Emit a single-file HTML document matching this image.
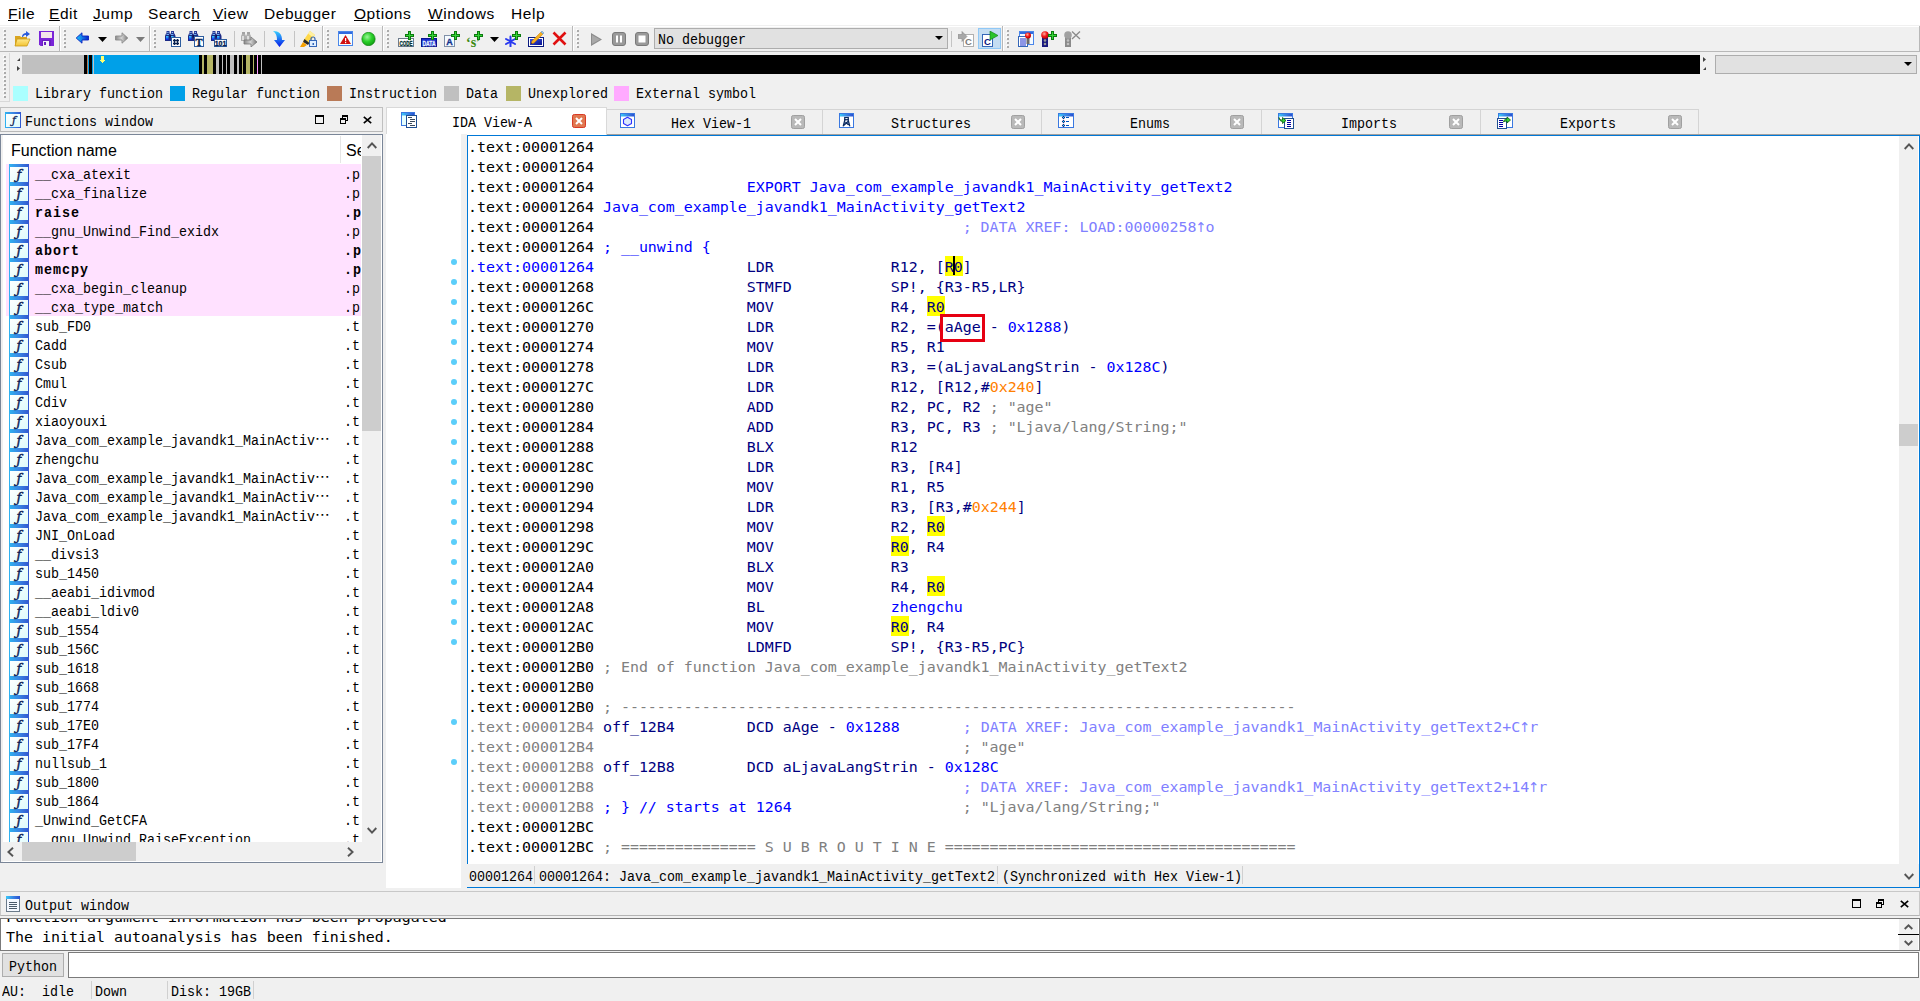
<!DOCTYPE html><html><head><meta charset="utf-8"><title>IDA</title><style>*{box-sizing:border-box;margin:0;padding:0}
html,body{width:1920px;height:1001px;overflow:hidden;background:#f0f0f0}
body{position:relative;font-family:"Liberation Sans","DejaVu Sans",sans-serif;color:#000}
.a{position:absolute}
.ss{position:absolute;font-family:"Liberation Mono","DejaVu Sans Mono",monospace;font-size:14.5px;line-height:16px;white-space:pre;transform:scaleX(.9195);transform-origin:0 0}
.menu{position:absolute;top:1px;font-family:"Liberation Sans","DejaVu Sans",sans-serif;font-size:15.5px;letter-spacing:.55px;line-height:26px;white-space:pre}
.menu u{text-decoration:underline;text-underline-offset:1px;text-decoration-thickness:1px}
.dl{position:absolute;left:468px;height:20px;font-family:"DejaVu Sans Mono","Liberation Mono",monospace;font-size:14.95px;line-height:22px;white-space:pre;color:#000080}
.dl span{display:inline-block;height:20px;vertical-align:top}
.k{color:#000}.g{color:#808080}.b{color:#0000ff}.n{color:#000080}.x{color:#8080ff}.o{color:#ff8000}
.y{background:#ffff00}
.dot{position:absolute;left:451px;width:6px;height:6px;border-radius:3px;background:#5bcefa}
.sq{position:absolute;top:86px;width:15px;height:15px}
.hd{position:absolute;font-family:"Liberation Sans","DejaVu Sans",sans-serif;font-size:16px;line-height:20px;white-space:pre}
.ow{position:absolute;font-family:"DejaVu Sans Mono","Liberation Mono",monospace;font-size:14.95px;line-height:20px;white-space:pre;color:#000}
.ss b{font-weight:bold;letter-spacing:1.1px}
.dl span.ar{width:9px;font-family:"DejaVu Sans","Liberation Sans",sans-serif;font-size:13.5px;text-indent:-1.2px;overflow:visible}
.el{font-family:"IPAGothic","Noto Sans CJK SC",sans-serif;font-size:16px;line-height:0}
</style></head><body>
<div class="a" style="left:0px;top:0px;width:1920px;height:25px;background:#fff;"></div>
<div class="a" style="left:0px;top:26px;width:1920px;height:1px;background:#fff;"></div>
<div class="menu" style="left:8px"><u>F</u>ile</div>
<div class="menu" style="left:49px"><u>E</u>dit</div>
<div class="menu" style="left:93px"><u>J</u>ump</div>
<div class="menu" style="left:148px">Searc<u>h</u></div>
<div class="menu" style="left:213px"><u>V</u>iew</div>
<div class="menu" style="left:264px">Deb<u>u</u>gger</div>
<div class="menu" style="left:354px"><u>O</u>ptions</div>
<div class="menu" style="left:428px"><u>W</u>indows</div>
<div class="menu" style="left:511px">Help</div>
<div class="a" style="left:0px;top:51px;width:1920px;height:1px;background:#b8b8b8;"></div>
<div class="a" style="left:1919px;top:26px;width:1px;height:25px;background:#b8b8b8;"></div>
<svg width="0" height="0" style="position:absolute"><defs><linearGradient id="gy" x1="0" y1="0" x2="0" y2="1"><stop offset="0" stop-color="#ffe98a"/><stop offset="1" stop-color="#f3c332"/></linearGradient><linearGradient id="gb" x1="0" y1="0" x2="1" y2="0"><stop offset="0" stop-color="#19c9ff"/><stop offset="1" stop-color="#0a22c8"/></linearGradient><linearGradient id="gbv" x1="0" y1="0" x2="0" y2="1"><stop offset="0" stop-color="#37d0ff"/><stop offset="1" stop-color="#0618e8"/></linearGradient><linearGradient id="gg" x1="0" y1="0" x2="1" y2="0"><stop offset="0" stop-color="#8a8a8a"/><stop offset=".5" stop-color="#d2d2d2"/><stop offset="1" stop-color="#777"/></linearGradient><radialGradient id="gr" cx=".4" cy=".35" r=".7"><stop offset="0" stop-color="#9cf59a"/><stop offset=".5" stop-color="#2bd02a"/><stop offset="1" stop-color="#0e9a10"/></radialGradient><radialGradient id="rr" cx=".4" cy=".35" r=".7"><stop offset="0" stop-color="#ffb0a0"/><stop offset=".5" stop-color="#f01818"/><stop offset="1" stop-color="#b00000"/></radialGradient><linearGradient id="gdb" x1="0" y1="0" x2="1" y2="1"><stop offset="0" stop-color="#3a50e0"/><stop offset="1" stop-color="#0a1490"/></linearGradient><symbol id="bino" viewBox="0 0 16 16"><rect x="1.5" y="0" width="3" height="3" fill="#2a3a98"/><rect x="6" y="0" width="3" height="3" fill="#2a3a98"/><rect x="2.3" y="1" width="1.2" height="1" fill="#8fc4f5"/><rect x="6.8" y="1" width="1.2" height="1" fill="#8fc4f5"/><path d="M1 2.5h4l.5 2.5v5H0V5z" fill="#1c2a86"/><path d="M5.5 2.5h4l1 2.5v5H5V5z" fill="#1c2a86"/><rect x="1.5" y="3" width="2.5" height="1" fill="#6fb0f0"/><rect x="6" y="3" width="2.5" height="1" fill="#6fb0f0"/><rect x="1" y="5" width="2.5" height="4" fill="url(#gbv)"/><rect x="6" y="5" width="2.5" height="4" fill="url(#gbv)"/><rect x="4.5" y="4" width="1.5" height="2.5" fill="#0c1450"/></symbol><symbol id="plus" viewBox="0 0 9 9"><path d="M3 0h3v3h3v3H6v3H3V6H0V3h3z" fill="#0c7a10"/><path d="M4 1h1v3h3v1H5v3H4V5H1V4h3z" fill="#35d436"/></symbol></defs></svg>
<svg class="a" style="left:3px;top:29px" width="3" height="20" viewBox="0 0 3 20" ><rect x="0" y="0" width="2" height="2" fill="#fbfbfb"/><rect x="1" y="1" width="2" height="2" fill="#ababab"/><rect x="0" y="4" width="2" height="2" fill="#fbfbfb"/><rect x="1" y="5" width="2" height="2" fill="#ababab"/><rect x="0" y="8" width="2" height="2" fill="#fbfbfb"/><rect x="1" y="9" width="2" height="2" fill="#ababab"/><rect x="0" y="12" width="2" height="2" fill="#fbfbfb"/><rect x="1" y="13" width="2" height="2" fill="#ababab"/><rect x="0" y="16" width="2" height="2" fill="#fbfbfb"/><rect x="1" y="17" width="2" height="2" fill="#ababab"/></svg>
<svg class="a" style="left:14px;top:31px" width="17" height="16" viewBox="0 0 17 16" ><path d="M1 5h5l1 1h6v9H1z" fill="#d9a520"/><path d="M3 8h13l-3 7H1z" fill="url(#gy)" stroke="#c99a1a" stroke-width=".8"/><path d="M8 6c0-3 2-4 4-4V0l4 3-4 3V4c-1.5 0-2.5.5-3 2z" fill="#2a5bdc"/></svg>
<svg class="a" style="left:39px;top:31px" width="15" height="15" viewBox="0 0 15 15" ><path d="M0 0h15v15H1.5L0 13.5z" fill="#7a25d8"/><rect x="2" y="1" width="11" height="6" fill="#f4e6ea"/><rect x="3" y="9" width="9" height="6" fill="#6a1fc0"/><rect x="4" y="10" width="6" height="5" fill="#f2f2fa"/><rect x="5" y="11" width="2" height="3" fill="#6a1fc0"/></svg>
<div class="a" style="left:59px;top:26px;width:1px;height:25px;background:#b8b8b8"></div>
<div class="a" style="left:60px;top:27px;width:1px;height:24px;background:#fff"></div>
<svg class="a" style="left:63px;top:29px" width="3" height="20" viewBox="0 0 3 20" ><rect x="0" y="0" width="2" height="2" fill="#fbfbfb"/><rect x="1" y="1" width="2" height="2" fill="#ababab"/><rect x="0" y="4" width="2" height="2" fill="#fbfbfb"/><rect x="1" y="5" width="2" height="2" fill="#ababab"/><rect x="0" y="8" width="2" height="2" fill="#fbfbfb"/><rect x="1" y="9" width="2" height="2" fill="#ababab"/><rect x="0" y="12" width="2" height="2" fill="#fbfbfb"/><rect x="1" y="13" width="2" height="2" fill="#ababab"/><rect x="0" y="16" width="2" height="2" fill="#fbfbfb"/><rect x="1" y="17" width="2" height="2" fill="#ababab"/></svg>
<svg class="a" style="left:75px;top:32px" width="15" height="12" viewBox="0 0 15 12" ><path d="M7 .8v3.2h6.5v4H7v3.2L1.2 6z" fill="url(#gb)" stroke="#0a20c0" stroke-width=".9" stroke-linejoin="round"/></svg>
<svg class="a" style="left:98px;top:37px" width="9" height="5" viewBox="0 0 9 5" ><path d="M0 0h9L4.5 5z" fill="#000"/></svg>
<svg class="a" style="left:114px;top:32px" width="15" height="12" viewBox="0 0 15 12" ><path d="M8 .8v3.2H1.5v4H8v3.2L13.8 6z" fill="url(#gg)" stroke="#8a8a8a" stroke-width=".9" stroke-linejoin="round"/></svg>
<svg class="a" style="left:136px;top:37px" width="9" height="5" viewBox="0 0 9 5" ><path d="M0 0h9L4.5 5z" fill="#7a7a7a"/></svg>
<div class="a" style="left:149px;top:26px;width:1px;height:25px;background:#b8b8b8"></div>
<div class="a" style="left:150px;top:27px;width:1px;height:24px;background:#fff"></div>
<svg class="a" style="left:153px;top:29px" width="3" height="20" viewBox="0 0 3 20" ><rect x="0" y="0" width="2" height="2" fill="#fbfbfb"/><rect x="1" y="1" width="2" height="2" fill="#ababab"/><rect x="0" y="4" width="2" height="2" fill="#fbfbfb"/><rect x="1" y="5" width="2" height="2" fill="#ababab"/><rect x="0" y="8" width="2" height="2" fill="#fbfbfb"/><rect x="1" y="9" width="2" height="2" fill="#ababab"/><rect x="0" y="12" width="2" height="2" fill="#fbfbfb"/><rect x="1" y="13" width="2" height="2" fill="#ababab"/><rect x="0" y="16" width="2" height="2" fill="#fbfbfb"/><rect x="1" y="17" width="2" height="2" fill="#ababab"/></svg>
<svg class="a" style="left:165px;top:31px" width="16" height="16" viewBox="0 0 16 16" ><use href="#bino" width="16" height="16"/><rect x="6.5" y="6.5" width="9" height="9" fill="#fff" stroke="#2d5d9f"/><path d="M9.5 8v6M12.5 8v6M8 9.5h6M8 12.5h6" stroke="#06204f" stroke-width="1.3"/></svg>
<svg class="a" style="left:188px;top:31px" width="16" height="16" viewBox="0 0 16 16" ><use href="#bino" width="16" height="16"/><rect x="6.5" y="5.5" width="9" height="10" fill="#fff" stroke="#2d5d9f"/><text x="11" y="14.5" text-anchor="middle" font-family="Liberation Serif,DejaVu Serif,serif" font-weight="bold" font-size="10.5" fill="#06204f" stroke="#06204f" stroke-width=".4">T</text></svg>
<svg class="a" style="left:211px;top:31px" width="16" height="16" viewBox="0 0 16 16" ><use href="#bino" width="16" height="16"/><rect x="3.5" y="8.5" width="12" height="7" fill="#fff" stroke="#2d5d9f"/><text x="9.5" y="14.5" text-anchor="middle" font-family="Liberation Sans,DejaVu Sans,sans-serif" font-weight="bold" font-size="7" fill="#06204f" stroke="#06204f" stroke-width=".3">101</text></svg>
<div class="a" style="left:234px;top:31px;width:1px;height:16px;background:#c4c4c4"></div>
<svg class="a" style="left:241px;top:31px" width="16" height="16" viewBox="0 0 16 16" ><g opacity=".75"><rect x="1" y="1" width="3" height="2" fill="#8a8a8a"/><rect x="6" y="1" width="3" height="2" fill="#8a8a8a"/><path d="M1 3h3l1 2v5H0V5z" fill="#9a9a9a"/><path d="M6 3h3l1 2v5H5V5z" fill="#9a9a9a"/><rect x="1" y="5" width="2" height="4" fill="#d8d8d8"/><rect x="6" y="5" width="2" height="4" fill="#d8d8d8"/></g><path d="M3 9h7V6l6 5-6 5v-3H3z" fill="url(#gg)" stroke="#777" stroke-width=".8"/></svg>
<div class="a" style="left:264px;top:31px;width:1px;height:16px;background:#c4c4c4"></div>
<svg class="a" style="left:272px;top:31px" width="14" height="16" viewBox="0 0 14 16" ><path d="M1 0c6 0 9 3 9 9h3l-5.5 7L2 9h3c0-4-1-7-4-9z" fill="url(#gbv)"/></svg>
<div class="a" style="left:294px;top:31px;width:1px;height:16px;background:#c4c4c4"></div>
<svg class="a" style="left:300px;top:31px" width="17" height="16" viewBox="0 0 17 16" ><path d="M10 0l5 4-7 9-5-3z" fill="#ffd84a"/><path d="M10 0l5 4-2 2.5-5-4z" fill="#fff0a0"/><path d="M4.5 8l5 4-1.5 2-5-3z" fill="#2a2a2a"/><path d="M3 11l4 3-3 2H0z" fill="#f5a000"/><rect x="9.5" y="9.5" width="7" height="6" fill="#dfeeff" stroke="#3466b8"/><path d="M11 9.5V8a2 2 0 0 1 4 0v1.5" fill="none" stroke="#3466b8" stroke-width="1.2"/><rect x="12.5" y="12" width="1.5" height="2" fill="#3466b8"/></svg>
<div class="a" style="left:322px;top:26px;width:1px;height:25px;background:#b8b8b8"></div>
<div class="a" style="left:323px;top:27px;width:1px;height:24px;background:#fff"></div>
<svg class="a" style="left:326px;top:29px" width="3" height="20" viewBox="0 0 3 20" ><rect x="0" y="0" width="2" height="2" fill="#fbfbfb"/><rect x="1" y="1" width="2" height="2" fill="#ababab"/><rect x="0" y="4" width="2" height="2" fill="#fbfbfb"/><rect x="1" y="5" width="2" height="2" fill="#ababab"/><rect x="0" y="8" width="2" height="2" fill="#fbfbfb"/><rect x="1" y="9" width="2" height="2" fill="#ababab"/><rect x="0" y="12" width="2" height="2" fill="#fbfbfb"/><rect x="1" y="13" width="2" height="2" fill="#ababab"/><rect x="0" y="16" width="2" height="2" fill="#fbfbfb"/><rect x="1" y="17" width="2" height="2" fill="#ababab"/></svg>
<svg class="a" style="left:338px;top:31px" width="15" height="15" viewBox="0 0 15 15" ><rect x=".5" y=".5" width="14" height="14" fill="#f4ffff" stroke="#4a86ea"/><rect x="1" y="1" width="13" height="2" fill="#2f6be0"/><path d="M7.5 4l5.5 9H2z" fill="#d01010"/><rect x="7" y="7" width="1.2" height="3.2" fill="#fff"/><rect x="7" y="11" width="1.2" height="1.2" fill="#fff"/></svg>
<svg class="a" style="left:361px;top:32px" width="15" height="14" viewBox="0 0 15 14" ><circle cx="7.5" cy="7" r="6.700" fill="url(#gr)" stroke="#0a7a0c" stroke-width=".6"/></svg>
<div class="a" style="left:382px;top:26px;width:1px;height:25px;background:#b8b8b8"></div>
<div class="a" style="left:383px;top:27px;width:1px;height:24px;background:#fff"></div>
<svg class="a" style="left:386px;top:29px" width="3" height="20" viewBox="0 0 3 20" ><rect x="0" y="0" width="2" height="2" fill="#fbfbfb"/><rect x="1" y="1" width="2" height="2" fill="#ababab"/><rect x="0" y="4" width="2" height="2" fill="#fbfbfb"/><rect x="1" y="5" width="2" height="2" fill="#ababab"/><rect x="0" y="8" width="2" height="2" fill="#fbfbfb"/><rect x="1" y="9" width="2" height="2" fill="#ababab"/><rect x="0" y="12" width="2" height="2" fill="#fbfbfb"/><rect x="1" y="13" width="2" height="2" fill="#ababab"/><rect x="0" y="16" width="2" height="2" fill="#fbfbfb"/><rect x="1" y="17" width="2" height="2" fill="#ababab"/></svg>
<svg class="a" style="left:398px;top:31px" width="16" height="16" viewBox="0 0 16 16" ><rect x=".5" y="7.5" width="15" height="8" fill="#fff" stroke="#6e7c8c"/><text x="8" y="14.5" text-anchor="middle" font-family="Liberation Sans,DejaVu Sans,sans-serif" font-weight="bold" font-size="8" fill="#003030" stroke="#003030" stroke-width=".35" textLength="13" lengthAdjust="spacingAndGlyphs">CODE</text><use href="#plus" x="7" y="0" width="9" height="9"/></svg>
<svg class="a" style="left:421px;top:31px" width="16" height="16" viewBox="0 0 16 16" ><rect x=".5" y="7.5" width="15" height="8" fill="#1a2ccc" stroke="#0a1490"/><text x="8" y="14.5" text-anchor="middle" font-family="Liberation Sans,DejaVu Sans,sans-serif" font-weight="bold" font-size="8" fill="#e4f4ff" stroke="#e4f4ff" stroke-width=".3" textLength="13" lengthAdjust="spacingAndGlyphs">DATA</text><use href="#plus" x="7" y="0" width="9" height="9"/></svg>
<svg class="a" style="left:444px;top:31px" width="16" height="16" viewBox="0 0 16 16" ><rect x=".5" y="4.5" width="10" height="11" fill="#f4faff" stroke="#8090a8"/><text x="5.5" y="14" text-anchor="middle" font-family="Liberation Sans,DejaVu Sans,sans-serif" font-weight="bold" font-size="9" fill="#10308c" stroke="#10308c" stroke-width=".3">A</text><use href="#plus" x="7" y="0" width="9" height="9"/></svg>
<svg class="a" style="left:466px;top:31px" width="17" height="16" viewBox="0 0 17 16" ><text x="0" y="15.5" font-family="Liberation Serif,DejaVu Serif,serif" font-weight="bold" font-size="14" fill="#3a8a10">‘s’</text><use href="#plus" x="8" y="0" width="9" height="9"/></svg>
<svg class="a" style="left:490px;top:37px" width="9" height="5" viewBox="0 0 9 5" ><path d="M0 0h9L4.5 5z" fill="#000"/></svg>
<svg class="a" style="left:505px;top:31px" width="16" height="16" viewBox="0 0 16 16" ><g stroke="#2a3af0" stroke-width="2" stroke-linecap="round"><path d="M5.5 5.5v10M1 8l9 5M1 13l9-5"/></g><use href="#plus" x="7" y="0" width="9" height="9"/></svg>
<svg class="a" style="left:528px;top:31px" width="16" height="16" viewBox="0 0 16 16" ><rect x=".5" y="6.5" width="15" height="9" fill="#fff" stroke="#0a1a80"/><rect x="2" y="8" width="12" height="6" fill="url(#gdb)"/><path d="M3 13l1-3 9-9 2 2-9 9z" fill="#f6b020" stroke="#c07808" stroke-width=".5"/><path d="M13 1l1-1 2 2-1 1z" fill="#9fd0f0" stroke="#5a8ab8" stroke-width=".5"/><path d="M3 13l.5-1.5 1 1z" fill="#222"/></svg>
<svg class="a" style="left:552px;top:31px" width="15" height="15" viewBox="0 0 15 15" ><path d="M1.5 1.5l12 12M13.5 1.5l-12 12" stroke="#e01010" stroke-width="2.600" fill="none"/></svg>
<div class="a" style="left:572px;top:26px;width:1px;height:25px;background:#b8b8b8"></div>
<div class="a" style="left:573px;top:27px;width:1px;height:24px;background:#fff"></div>
<svg class="a" style="left:576px;top:29px" width="3" height="20" viewBox="0 0 3 20" ><rect x="0" y="0" width="2" height="2" fill="#fbfbfb"/><rect x="1" y="1" width="2" height="2" fill="#ababab"/><rect x="0" y="4" width="2" height="2" fill="#fbfbfb"/><rect x="1" y="5" width="2" height="2" fill="#ababab"/><rect x="0" y="8" width="2" height="2" fill="#fbfbfb"/><rect x="1" y="9" width="2" height="2" fill="#ababab"/><rect x="0" y="12" width="2" height="2" fill="#fbfbfb"/><rect x="1" y="13" width="2" height="2" fill="#ababab"/><rect x="0" y="16" width="2" height="2" fill="#fbfbfb"/><rect x="1" y="17" width="2" height="2" fill="#ababab"/></svg>
<svg class="a" style="left:591px;top:33px" width="11" height="13" viewBox="0 0 11 13" ><path d="M0 0l11 6.5L0 13z" fill="#8c8c8c"/><path d="M1 2l8 4.5L1 11z" fill="#a8a8a8"/></svg>
<svg class="a" style="left:612px;top:32px" width="14" height="14" viewBox="0 0 14 14" ><rect x=".5" y=".5" width="13" height="13" rx="2.5" fill="#9a9a9a" stroke="#7a7a7a"/><rect x="4" y="3.5" width="2" height="7" fill="#fff"/><rect x="8" y="3.5" width="2" height="7" fill="#fff"/></svg>
<svg class="a" style="left:635px;top:32px" width="14" height="14" viewBox="0 0 14 14" ><rect x=".5" y=".5" width="13" height="13" rx="2.5" fill="#9a9a9a" stroke="#7a7a7a"/><rect x="3.5" y="3.5" width="7" height="7" fill="#fff"/></svg>
<div class="a" style="left:654px;top:28px;width:294px;height:21px;background:#e1e1e1;border:1px solid #adadad"></div>
<div class="ss" style="left:658px;top:32px">No debugger</div>
<svg class="a" style="left:935px;top:36px" width="8" height="4" viewBox="0 0 8 4" ><path d="M0 0h8L4 4z" fill="#000"/></svg>
<div class="a" style="left:951px;top:31px;width:1px;height:16px;background:#c4c4c4"></div>
<svg class="a" style="left:958px;top:31px" width="16" height="16" viewBox="0 0 16 16" ><rect x="5.5" y="3.5" width="10" height="12" fill="#fff" stroke="#b0b0b0"/><text x="10.5" y="13.5" text-anchor="middle" font-family="Liberation Sans,DejaVu Sans,sans-serif" font-weight="bold" font-size="9.5" fill="#7a7a7a">C</text><path d="M0 3.5h4V.5l5 5-5 5v-3H0z" fill="#a8a8a8" stroke="#8a8a8a" stroke-width=".6"/></svg>
<div class="a" style="left:978px;top:28px;width:23px;height:21px;background:#c4ddf2;border:1px solid #90c8f6"></div>
<svg class="a" style="left:982px;top:31px" width="16" height="16" viewBox="0 0 16 16" ><rect x=".5" y="3.5" width="10" height="12" fill="#fff" stroke="#3466b8"/><text x="5.5" y="13.5" text-anchor="middle" font-family="Liberation Sans,DejaVu Sans,sans-serif" font-weight="bold" font-size="9.5" fill="#0a1480">C</text><path d="M8 0l8 4.5L8 9z" fill="#2bc42a" stroke="#0c7a10" stroke-width=".6"/></svg>
<div class="a" style="left:1002px;top:26px;width:1px;height:25px;background:#b8b8b8"></div>
<div class="a" style="left:1003px;top:27px;width:1px;height:24px;background:#fff"></div>
<svg class="a" style="left:1006px;top:29px" width="3" height="20" viewBox="0 0 3 20" ><rect x="0" y="0" width="2" height="2" fill="#fbfbfb"/><rect x="1" y="1" width="2" height="2" fill="#ababab"/><rect x="0" y="4" width="2" height="2" fill="#fbfbfb"/><rect x="1" y="5" width="2" height="2" fill="#ababab"/><rect x="0" y="8" width="2" height="2" fill="#fbfbfb"/><rect x="1" y="9" width="2" height="2" fill="#ababab"/><rect x="0" y="12" width="2" height="2" fill="#fbfbfb"/><rect x="1" y="13" width="2" height="2" fill="#ababab"/><rect x="0" y="16" width="2" height="2" fill="#fbfbfb"/><rect x="1" y="17" width="2" height="2" fill="#ababab"/></svg>
<svg class="a" style="left:1018px;top:31px" width="16" height="16" viewBox="0 0 16 16" ><rect x="1.5" y=".5" width="14" height="13" fill="#f4faff" stroke="#4a86ea"/><rect x="2" y="1" width="13" height="2" fill="#2f6be0"/><rect x=".5" y="5.5" width="9" height="10" fill="#fff" stroke="#3466b8"/><path d="M2 8h6M2 10h6M2 12h6M2 14h6" stroke="#1a2ccc" stroke-width="1"/><rect x="8.5" y="6" width="3" height="7" fill="#6a6a6a"/><circle cx="10" cy="4.5" r="3" fill="url(#rr)"/></svg>
<svg class="a" style="left:1041px;top:31px" width="16" height="16" viewBox="0 0 16 16" ><rect x="1" y="6" width="6" height="10" fill="#1a1a80"/><circle cx="4" cy="9.5" r="1.3" fill="#9a9a9a"/><circle cx="4" cy="13" r="1.3" fill="#9a9a9a"/><circle cx="4" cy="4" r="3.8" fill="url(#rr)"/><use href="#plus" x="7" y="0" width="9" height="9"/></svg>
<svg class="a" style="left:1064px;top:31px" width="17" height="16" viewBox="0 0 17 16" ><rect x="1" y="6" width="6" height="10" fill="#8a8a8a"/><circle cx="4" cy="9.5" r="1.3" fill="#c0c0c0"/><circle cx="4" cy="13" r="1.3" fill="#c0c0c0"/><circle cx="4" cy="4" r="3.8" fill="#a0a0a0"/><path d="M8 .5l8 7.5M16 .5l-8 7.5" stroke="#8a8a8a" stroke-width="1.3" fill="none"/></svg>
<div class="a" style="left:22px;top:55px;width:1678px;height:19px;background:#000"></div>
<div class="a" style="left:22px;top:55px;width:62px;height:19px;background:#c0c0c0"></div>
<div class="a" style="left:87px;top:55px;width:1px;height:19px;background:#b97a57"></div>
<div class="a" style="left:88px;top:55px;width:1px;height:19px;background:#00a0e8"></div>
<div class="a" style="left:92px;top:55px;width:1px;height:19px;background:#00a0e8"></div>
<div class="a" style="left:93px;top:55px;width:1px;height:19px;background:#c0c0c0"></div>
<div class="a" style="left:94px;top:55px;width:105px;height:19px;background:#00a0e8"></div>
<div class="a" style="left:202px;top:55px;width:2px;height:19px;background:#b5b565"></div>
<div class="a" style="left:207px;top:55px;width:6px;height:19px;background:#b5b565"></div>
<div class="a" style="left:216px;top:55px;width:3px;height:19px;background:#c0c0c0"></div>
<div class="a" style="left:222px;top:55px;width:1px;height:19px;background:#c0c0c0"></div>
<div class="a" style="left:226px;top:55px;width:1px;height:19px;background:#c0c0c0"></div>
<div class="a" style="left:230px;top:55px;width:4px;height:19px;background:#c0c0c0"></div>
<div class="a" style="left:237px;top:55px;width:2px;height:19px;background:#c0c0c0"></div>
<div class="a" style="left:242px;top:55px;width:1px;height:19px;background:#b5b565"></div>
<div class="a" style="left:246px;top:55px;width:4px;height:19px;background:#b5b565"></div>
<div class="a" style="left:253px;top:55px;width:1px;height:19px;background:#b5b565"></div>
<div class="a" style="left:257px;top:55px;width:1px;height:19px;background:#ff9cff"></div>
<div class="a" style="left:261px;top:55px;width:1px;height:19px;background:#c0c0c0"></div>
<svg class="a" style="left:100px;top:56px" width="5" height="7" shape-rendering="crispEdges"><path d="M1 0h3v4h1v1h-1v1h-1v1h-1v-1h-1v-1h-1v-1h1z" fill="#ffff70"/></svg>
<svg class="a" style="left:3px;top:55px" width="3" height="44"><rect x="0" y="0" width="2" height="2" fill="#fbfbfb"/><rect x="1" y="1" width="2" height="2" fill="#ababab"/><rect x="0" y="4" width="2" height="2" fill="#fbfbfb"/><rect x="1" y="5" width="2" height="2" fill="#ababab"/><rect x="0" y="8" width="2" height="2" fill="#fbfbfb"/><rect x="1" y="9" width="2" height="2" fill="#ababab"/><rect x="0" y="12" width="2" height="2" fill="#fbfbfb"/><rect x="1" y="13" width="2" height="2" fill="#ababab"/><rect x="0" y="16" width="2" height="2" fill="#fbfbfb"/><rect x="1" y="17" width="2" height="2" fill="#ababab"/><rect x="0" y="20" width="2" height="2" fill="#fbfbfb"/><rect x="1" y="21" width="2" height="2" fill="#ababab"/><rect x="0" y="24" width="2" height="2" fill="#fbfbfb"/><rect x="1" y="25" width="2" height="2" fill="#ababab"/><rect x="0" y="28" width="2" height="2" fill="#fbfbfb"/><rect x="1" y="29" width="2" height="2" fill="#ababab"/><rect x="0" y="32" width="2" height="2" fill="#fbfbfb"/><rect x="1" y="33" width="2" height="2" fill="#ababab"/><rect x="0" y="36" width="2" height="2" fill="#fbfbfb"/><rect x="1" y="37" width="2" height="2" fill="#ababab"/><rect x="0" y="40" width="2" height="2" fill="#fbfbfb"/><rect x="1" y="41" width="2" height="2" fill="#ababab"/></svg>
<div class="a" style="left:9px;top:53px;width:1px;height:49px;background:#d8d8d8"></div>
<div class="a" style="left:0;top:101px;width:10px;height:1px;background:#d8d8d8"></div>
<svg class="a" style="left:17px;top:58px" width="3" height="3"><path d="M3 0v3H0z" fill="#404040"/></svg>
<svg class="a" style="left:17px;top:66px" width="3" height="5"><path d="M0 0l3 2.5L0 5z" fill="#404040"/></svg>
<svg class="a" style="left:1703px;top:57px" width="3" height="5"><path d="M0 0l3 2.5L0 5z" fill="#404040"/></svg>
<svg class="a" style="left:1703px;top:67px" width="3" height="3"><path d="M3 0v3H0z" fill="#404040"/></svg>
<div class="a" style="left:1715px;top:55px;width:202px;height:19px;background:#e1e1e1;border:1px solid #adadad"></div>
<svg class="a" style="left:1904px;top:62px" width="8" height="4"><path d="M0 0h8L4 4z" fill="#000"/></svg>
<div class="sq" style="left:13px;background:#aaffff"></div>
<div class="ss" style="left:35px;top:86px;">Library function</div>
<div class="sq" style="left:170px;background:#00a0e8"></div>
<div class="ss" style="left:192px;top:86px;">Regular function</div>
<div class="sq" style="left:327px;background:#b97a57"></div>
<div class="ss" style="left:349px;top:86px;">Instruction</div>
<div class="sq" style="left:444px;background:#c0c0c0"></div>
<div class="ss" style="left:466px;top:86px;">Data</div>
<div class="sq" style="left:506px;background:#b5b565"></div>
<div class="ss" style="left:528px;top:86px;">Unexplored</div>
<div class="sq" style="left:614px;background:#ffaaff"></div>
<div class="ss" style="left:636px;top:86px;">External symbol</div>
<svg width="0" height="0" style="position:absolute"><defs>
<linearGradient id="fg" x1="0" y1="0" x2="1" y2="0"><stop offset="0" stop-color="#2fb4f0"/><stop offset=".5" stop-color="#3a86e4"/><stop offset="1" stop-color="#3156cf"/></linearGradient><linearGradient id="fg2" x1="0" y1="0" x2="1" y2="1"><stop offset="0" stop-color="#ffffff"/><stop offset="1" stop-color="#dcfbfb"/></linearGradient>
<symbol id="fic" viewBox="0 0 20 19"><rect x="0" y="0" width="20" height="19" fill="url(#fg)"/><rect x="1" y="3" width="18" height="15" fill="url(#fg2)"/><text x="7.4" y="14.6" font-family="DejaVu Serif,Liberation Serif,serif" font-style="italic" font-size="13" fill="#0c1c54" stroke="#0c1c54" stroke-width=".45">ƒ</text></symbol>
</defs></svg>
<!-- functions window title -->
<div class="a" style="left:0;top:107px;width:383px;height:25px;border:1px solid #c0c0c0;border-bottom-color:#b8b8b8;background:#f0f0f0"></div>
<svg class="a" style="left:5px;top:112px" width="16" height="16"><rect x="0" y="0" width="16" height="16" fill="url(#fg)"/><rect x="1" y="2" width="14" height="13" fill="url(#fg2)"/><text x="6.9" y="12.1" font-family="DejaVu Serif,Liberation Serif,serif" font-style="italic" font-size="10.5" fill="#0c1c54" stroke="#0c1c54" stroke-width=".3">ƒ</text></svg>
<div class="ss" style="left:25px;top:114px">Functions window</div>
<svg class="a" style="left:315px;top:115px" width="9" height="9"><rect x=".5" y="1" width="8" height="7.5" fill="none" stroke="#000" stroke-width="1"/><rect x="0" y="0" width="9" height="2" fill="#000"/></svg>
<svg class="a" style="left:340px;top:115px" width="9" height="9"><rect x="2.5" y="1" width="5" height="4.5" fill="none" stroke="#000"/><rect x="2" y="0" width="6" height="2" fill="#000"/><rect x=".5" y="4" width="5" height="4.5" fill="#f0f0f0" stroke="#000"/><rect x="0" y="3" width="6" height="2" fill="#000"/></svg>
<svg class="a" style="left:363px;top:116px" width="9" height="8"><path d="M.8.8l7.400 6.400M8.200.8l-7.400 6.400" stroke="#000" stroke-width="1.6" fill="none"/></svg>
<!-- list frame -->
<div class="a" style="left:0;top:134px;width:383px;height:729px;background:#fff;border:1px solid #7a8698"></div>
<div class="a" style="left:1px;top:135px;width:2px;height:727px;background:#f0f0f0"></div>
<div class="hd" style="left:11px;top:141px">Function name</div>
<div class="a" style="left:340px;top:136px;width:1px;height:27px;background:#e5e5e5"></div>
<div class="a" style="left:346px;top:136px;width:15px;height:27px;overflow:hidden"><div class="hd" style="left:0;top:5px">Segment</div></div>

<div class="a" style="left:3px;top:164px;width:359px;height:678px;overflow:hidden;background:#fff">
<div class="a" style="left:3px;top:0px;width:355px;height:19px;background:#ffe1ff"></div>
<svg class="a" style="left:6px;top:0px" width="20" height="19"><use href="#fic"/></svg>
<div class="ss" style="left:32px;top:3px">__cxa_atexit</div>
<div class="ss" style="left:341px;top:3px">.p</div>
<div class="a" style="left:3px;top:19px;width:355px;height:19px;background:#ffe1ff"></div>
<svg class="a" style="left:6px;top:19px" width="20" height="19"><use href="#fic"/></svg>
<div class="ss" style="left:32px;top:22px">__cxa_finalize</div>
<div class="ss" style="left:341px;top:22px">.p</div>
<div class="a" style="left:3px;top:38px;width:355px;height:19px;background:#ffe1ff"></div>
<svg class="a" style="left:6px;top:38px" width="20" height="19"><use href="#fic"/></svg>
<div class="ss" style="left:32px;top:41px"><b>raise</b></div>
<div class="ss" style="left:341px;top:41px"><b>.p</b></div>
<div class="a" style="left:3px;top:57px;width:355px;height:19px;background:#ffe1ff"></div>
<svg class="a" style="left:6px;top:57px" width="20" height="19"><use href="#fic"/></svg>
<div class="ss" style="left:32px;top:60px">__gnu_Unwind_Find_exidx</div>
<div class="ss" style="left:341px;top:60px">.p</div>
<div class="a" style="left:3px;top:76px;width:355px;height:19px;background:#ffe1ff"></div>
<svg class="a" style="left:6px;top:76px" width="20" height="19"><use href="#fic"/></svg>
<div class="ss" style="left:32px;top:79px"><b>abort</b></div>
<div class="ss" style="left:341px;top:79px"><b>.p</b></div>
<div class="a" style="left:3px;top:95px;width:355px;height:19px;background:#ffe1ff"></div>
<svg class="a" style="left:6px;top:95px" width="20" height="19"><use href="#fic"/></svg>
<div class="ss" style="left:32px;top:98px"><b>memcpy</b></div>
<div class="ss" style="left:341px;top:98px"><b>.p</b></div>
<div class="a" style="left:3px;top:114px;width:355px;height:19px;background:#ffe1ff"></div>
<svg class="a" style="left:6px;top:114px" width="20" height="19"><use href="#fic"/></svg>
<div class="ss" style="left:32px;top:117px">__cxa_begin_cleanup</div>
<div class="ss" style="left:341px;top:117px">.p</div>
<div class="a" style="left:3px;top:133px;width:355px;height:19px;background:#ffe1ff"></div>
<svg class="a" style="left:6px;top:133px" width="20" height="19"><use href="#fic"/></svg>
<div class="ss" style="left:32px;top:136px">__cxa_type_match</div>
<div class="ss" style="left:341px;top:136px">.p</div>
<svg class="a" style="left:6px;top:152px" width="20" height="19"><use href="#fic"/></svg>
<div class="ss" style="left:32px;top:155px">sub_FD0</div>
<div class="ss" style="left:341px;top:155px">.t</div>
<svg class="a" style="left:6px;top:171px" width="20" height="19"><use href="#fic"/></svg>
<div class="ss" style="left:32px;top:174px">Cadd</div>
<div class="ss" style="left:341px;top:174px">.t</div>
<svg class="a" style="left:6px;top:190px" width="20" height="19"><use href="#fic"/></svg>
<div class="ss" style="left:32px;top:193px">Csub</div>
<div class="ss" style="left:341px;top:193px">.t</div>
<svg class="a" style="left:6px;top:209px" width="20" height="19"><use href="#fic"/></svg>
<div class="ss" style="left:32px;top:212px">Cmul</div>
<div class="ss" style="left:341px;top:212px">.t</div>
<svg class="a" style="left:6px;top:228px" width="20" height="19"><use href="#fic"/></svg>
<div class="ss" style="left:32px;top:231px">Cdiv</div>
<div class="ss" style="left:341px;top:231px">.t</div>
<svg class="a" style="left:6px;top:247px" width="20" height="19"><use href="#fic"/></svg>
<div class="ss" style="left:32px;top:250px">xiaoyouxi</div>
<div class="ss" style="left:341px;top:250px">.t</div>
<svg class="a" style="left:6px;top:266px" width="20" height="19"><use href="#fic"/></svg>
<div class="ss" style="left:32px;top:269px">Java_com_example_javandk1_MainActiv<span class="el">…</span></div>
<div class="ss" style="left:341px;top:269px">.t</div>
<svg class="a" style="left:6px;top:285px" width="20" height="19"><use href="#fic"/></svg>
<div class="ss" style="left:32px;top:288px">zhengchu</div>
<div class="ss" style="left:341px;top:288px">.t</div>
<svg class="a" style="left:6px;top:304px" width="20" height="19"><use href="#fic"/></svg>
<div class="ss" style="left:32px;top:307px">Java_com_example_javandk1_MainActiv<span class="el">…</span></div>
<div class="ss" style="left:341px;top:307px">.t</div>
<svg class="a" style="left:6px;top:323px" width="20" height="19"><use href="#fic"/></svg>
<div class="ss" style="left:32px;top:326px">Java_com_example_javandk1_MainActiv<span class="el">…</span></div>
<div class="ss" style="left:341px;top:326px">.t</div>
<svg class="a" style="left:6px;top:342px" width="20" height="19"><use href="#fic"/></svg>
<div class="ss" style="left:32px;top:345px">Java_com_example_javandk1_MainActiv<span class="el">…</span></div>
<div class="ss" style="left:341px;top:345px">.t</div>
<svg class="a" style="left:6px;top:361px" width="20" height="19"><use href="#fic"/></svg>
<div class="ss" style="left:32px;top:364px">JNI_OnLoad</div>
<div class="ss" style="left:341px;top:364px">.t</div>
<svg class="a" style="left:6px;top:380px" width="20" height="19"><use href="#fic"/></svg>
<div class="ss" style="left:32px;top:383px">__divsi3</div>
<div class="ss" style="left:341px;top:383px">.t</div>
<svg class="a" style="left:6px;top:399px" width="20" height="19"><use href="#fic"/></svg>
<div class="ss" style="left:32px;top:402px">sub_1450</div>
<div class="ss" style="left:341px;top:402px">.t</div>
<svg class="a" style="left:6px;top:418px" width="20" height="19"><use href="#fic"/></svg>
<div class="ss" style="left:32px;top:421px">__aeabi_idivmod</div>
<div class="ss" style="left:341px;top:421px">.t</div>
<svg class="a" style="left:6px;top:437px" width="20" height="19"><use href="#fic"/></svg>
<div class="ss" style="left:32px;top:440px">__aeabi_ldiv0</div>
<div class="ss" style="left:341px;top:440px">.t</div>
<svg class="a" style="left:6px;top:456px" width="20" height="19"><use href="#fic"/></svg>
<div class="ss" style="left:32px;top:459px">sub_1554</div>
<div class="ss" style="left:341px;top:459px">.t</div>
<svg class="a" style="left:6px;top:475px" width="20" height="19"><use href="#fic"/></svg>
<div class="ss" style="left:32px;top:478px">sub_156C</div>
<div class="ss" style="left:341px;top:478px">.t</div>
<svg class="a" style="left:6px;top:494px" width="20" height="19"><use href="#fic"/></svg>
<div class="ss" style="left:32px;top:497px">sub_1618</div>
<div class="ss" style="left:341px;top:497px">.t</div>
<svg class="a" style="left:6px;top:513px" width="20" height="19"><use href="#fic"/></svg>
<div class="ss" style="left:32px;top:516px">sub_1668</div>
<div class="ss" style="left:341px;top:516px">.t</div>
<svg class="a" style="left:6px;top:532px" width="20" height="19"><use href="#fic"/></svg>
<div class="ss" style="left:32px;top:535px">sub_1774</div>
<div class="ss" style="left:341px;top:535px">.t</div>
<svg class="a" style="left:6px;top:551px" width="20" height="19"><use href="#fic"/></svg>
<div class="ss" style="left:32px;top:554px">sub_17E0</div>
<div class="ss" style="left:341px;top:554px">.t</div>
<svg class="a" style="left:6px;top:570px" width="20" height="19"><use href="#fic"/></svg>
<div class="ss" style="left:32px;top:573px">sub_17F4</div>
<div class="ss" style="left:341px;top:573px">.t</div>
<svg class="a" style="left:6px;top:589px" width="20" height="19"><use href="#fic"/></svg>
<div class="ss" style="left:32px;top:592px">nullsub_1</div>
<div class="ss" style="left:341px;top:592px">.t</div>
<svg class="a" style="left:6px;top:608px" width="20" height="19"><use href="#fic"/></svg>
<div class="ss" style="left:32px;top:611px">sub_1800</div>
<div class="ss" style="left:341px;top:611px">.t</div>
<svg class="a" style="left:6px;top:627px" width="20" height="19"><use href="#fic"/></svg>
<div class="ss" style="left:32px;top:630px">sub_1864</div>
<div class="ss" style="left:341px;top:630px">.t</div>
<svg class="a" style="left:6px;top:646px" width="20" height="19"><use href="#fic"/></svg>
<div class="ss" style="left:32px;top:649px">_Unwind_GetCFA</div>
<div class="ss" style="left:341px;top:649px">.t</div>
<svg class="a" style="left:6px;top:665px" width="20" height="19"><use href="#fic"/></svg>
<div class="ss" style="left:32px;top:668px">__gnu_Unwind_RaiseException</div>
<div class="ss" style="left:341px;top:668px">.t</div>
</div>
<!-- vertical scrollbar -->
<div class="a" style="left:362px;top:135px;width:19px;height:726px;background:#f0f0f0"></div>
<div class="a" style="left:362px;top:156px;width:19px;height:275px;background:#cdcdcd"></div>
<svg class="a" style="left:367px;top:142px" width="10" height="7"><path d="M.7 6 L5 1.4 L9.3 6" stroke="#555" stroke-width="1.9" fill="none"/></svg>
<svg class="a" style="left:367px;top:827px" width="10" height="7"><path d="M.7 1 L5 5.6 L9.3 1" stroke="#555" stroke-width="1.9" fill="none"/></svg>
<!-- horizontal scrollbar -->
<div class="a" style="left:1px;top:842px;width:380px;height:19px;background:#f0f0f0"></div>
<div class="a" style="left:22px;top:842px;width:114px;height:19px;background:#cdcdcd"></div>
<svg class="a" style="left:7px;top:847px" width="7" height="10"><path d="M6 .7 L1.4 5 L6 9.3" stroke="#555" stroke-width="1.9" fill="none"/></svg>
<svg class="a" style="left:347px;top:847px" width="7" height="10"><path d="M1 .7 L5.6 5 L1 9.3" stroke="#555" stroke-width="1.9" fill="none"/></svg>

<svg width="0" height="0" style="position:absolute"><defs><linearGradient id="tbg" x1="0" y1="0" x2="1" y2="0"><stop offset="0" stop-color="#38c8f8"/><stop offset=".5" stop-color="#3a86e4"/><stop offset="1" stop-color="#2a4fd0"/></linearGradient></defs></svg>
<div class="a" style="left:606px;top:134px;width:1314px;height:1px;background:#a0a0a0"></div>
<div class="a" style="left:386px;top:107px;width:221px;height:29px;background:#fff;border:1px solid #d9d9d9;border-bottom:none"></div>
<svg class="a" style="left:401px;top:112px" width="16" height="16"><rect x=".5" y=".5" width="13" height="13" fill="#e6ffff" stroke="#3a78e0"/><rect x="1" y="1" width="12" height="2.5" fill="url(#tbg)"/><rect x="5.5" y="3.5" width="10" height="12" fill="#fff" stroke="#1f4f92"/><path d="M7 5.5h4M9 7.5h5M9 9.5h5M7 11.5h4M9 13.5h5" stroke="#3c4a5c" stroke-width="1"/></svg>
<div class="ss" style="left:452px;top:115px">IDA View-A</div>
<svg class="a" style="left:572px;top:114px" width="14" height="14"><rect x=".5" y=".5" width="13" height="13" rx="1.8" fill="#e07850" stroke="#d93a25"/><path d="M4 4l6 6M10 4l-6 6" stroke="#fff" stroke-width="2" fill="none"/></svg>
<div class="a" style="left:607px;top:109px;width:216px;height:25px;background:#f0f0f0;border-top:1px solid #d4d4d4;border-right:1px solid #d4d4d4"></div>
<svg class="a" style="left:620px;top:113px" width="16" height="16"><rect x=".5" y=".5" width="14" height="14" fill="#fff" stroke="#3a78e0"/><rect x="1" y="1" width="13" height="2.5" fill="url(#tbg)"/><path d="M7.5 4.2L11.5 6.5V10.5L7.5 12.8 3.5 10.5V6.5z" fill="#dce9fb" stroke="#3030ff" stroke-width="1.1" stroke-linejoin="round"/></svg>
<div class="ss" style="left:671px;top:116px">Hex View-1</div>
<svg class="a" style="left:791px;top:115px" width="14" height="14"><rect x=".5" y=".5" width="13" height="13" rx="1.8" fill="#b9b9b9" stroke="#a0a0a0"/><path d="M4 4l6 6M10 4l-6 6" stroke="#fff" stroke-width="2" fill="none"/></svg>
<div class="a" style="left:823px;top:109px;width:219px;height:25px;background:#f0f0f0;border-top:1px solid #d4d4d4;border-right:1px solid #d4d4d4"></div>
<svg class="a" style="left:839px;top:113px" width="16" height="16"><rect x=".5" y=".5" width="14" height="14" fill="#fff" stroke="#3a78e0"/><rect x="1" y="1" width="13" height="2.5" fill="url(#tbg)"/><rect x="5.7" y="4.5" width="3.6" height="2.2" fill="#fff" stroke="#0a2a60" stroke-width="1.2"/><path d="M6 6.5L4.3 12.8M9 6.5L10.7 12.8M9.3 8.2L4.3 12.8M6.8 9.5l2.400 2" stroke="#0a2a60" stroke-width="1.3" fill="none" stroke-linecap="round"/></svg>
<div class="ss" style="left:891px;top:116px">Structures</div>
<svg class="a" style="left:1011px;top:115px" width="14" height="14"><rect x=".5" y=".5" width="13" height="13" rx="1.8" fill="#b9b9b9" stroke="#a0a0a0"/><path d="M4 4l6 6M10 4l-6 6" stroke="#fff" stroke-width="2" fill="none"/></svg>
<div class="a" style="left:1042px;top:109px;width:220px;height:25px;background:#f0f0f0;border-top:1px solid #d4d4d4;border-right:1px solid #d4d4d4"></div>
<svg class="a" style="left:1058px;top:113px" width="16" height="16"><rect x=".5" y=".5" width="15" height="14" fill="#fff" stroke="#3a78e0"/><rect x="1" y="1" width="14" height="2.5" fill="url(#tbg)"/><g fill="#0a1a80"><path d="M5.5 2.8l1.7 1.7-1.7 1.7-1.7-1.7zM5.5 6.8l1.7 1.7-1.7 1.7-1.7-1.7zM5.5 10.8l1.7 1.7-1.7 1.7-1.7-1.7z"/></g><g fill="#10e8f8"><rect x="5" y="4" width="1" height="1"/><rect x="5" y="8" width="1" height="1"/><rect x="5" y="12" width="1" height="1"/></g><path d="M8 4.5h3M8 8.5h3M8 12.5h3" stroke="#0050c0" stroke-width="1"/></svg>
<div class="ss" style="left:1130px;top:116px">Enums</div>
<svg class="a" style="left:1230px;top:115px" width="14" height="14"><rect x=".5" y=".5" width="13" height="13" rx="1.8" fill="#b9b9b9" stroke="#a0a0a0"/><path d="M4 4l6 6M10 4l-6 6" stroke="#fff" stroke-width="2" fill="none"/></svg>
<div class="a" style="left:1262px;top:109px;width:219px;height:25px;background:#f0f0f0;border-top:1px solid #d4d4d4;border-right:1px solid #d4d4d4"></div>
<svg class="a" style="left:1278px;top:113px" width="16" height="16"><rect x=".5" y=".5" width="14" height="14" fill="#fff" stroke="#3a78e0"/><rect x="1" y="1" width="13" height="2.5" fill="url(#tbg)"/><rect x="6.5" y="5.5" width="9" height="10" fill="#fff" stroke="#1f4f92"/><path d="M9 7.5h4M9 9.5h4M9 11.5h4M9 13.5h4" stroke="#0000a0" stroke-width="1"/><path d="M1 4.5c.5 2 1.5 2.5 3.5 2.5V4.5L8 7.5 4.5 10.5V8.5C2.5 8.5 1.3 7 1 4.5z" fill="#35d436" stroke="#0a5a10" stroke-width=".8" stroke-linejoin="round"/></svg>
<div class="ss" style="left:1341px;top:116px">Imports</div>
<svg class="a" style="left:1449px;top:115px" width="14" height="14"><rect x=".5" y=".5" width="13" height="13" rx="1.8" fill="#b9b9b9" stroke="#a0a0a0"/><path d="M4 4l6 6M10 4l-6 6" stroke="#fff" stroke-width="2" fill="none"/></svg>
<div class="a" style="left:1481px;top:109px;width:218px;height:25px;background:#f0f0f0;border-top:1px solid #d4d4d4;border-right:1px solid #d4d4d4"></div>
<svg class="a" style="left:1497px;top:113px" width="16" height="16"><rect x="1.5" y=".5" width="14" height="14" fill="#fff" stroke="#3a78e0"/><rect x="2" y="1" width="13" height="2.5" fill="url(#tbg)"/><rect x=".5" y="5.5" width="9" height="10" fill="#fff" stroke="#1f4f92"/><path d="M2 7.5h4M2 9.5h4M2 11.5h4M2 13.5h4" stroke="#0000a0" stroke-width="1"/><path d="M6.5 9c.3-2 1.5-3 3.5-3V4l3.5 3L10 10V8c-1.5 0-2.7.2-3.5 1z" fill="#35d436" stroke="#0a5a10" stroke-width=".8" stroke-linejoin="round"/></svg>
<div class="ss" style="left:1560px;top:116px">Exports</div>
<svg class="a" style="left:1668px;top:115px" width="14" height="14"><rect x=".5" y=".5" width="13" height="13" rx="1.8" fill="#b9b9b9" stroke="#a0a0a0"/><path d="M4 4l6 6M10 4l-6 6" stroke="#fff" stroke-width="2" fill="none"/></svg>
<!-- left margin (white) -->
<div class="a" style="left:386px;top:134px;width:75px;height:754px;background:#fff"></div>
<div class="a" style="left:461px;top:134px;width:6px;height:754px;background:#f0f0f0"></div>
<!-- view -->
<div class="a" style="left:467px;top:135px;width:1453px;height:753px;background:#fff;border:1px solid #0078d7"></div>
<!-- status strip -->
<div class="a" style="left:467px;top:864px;width:1432px;height:23px;background:#f0f0f0"></div>
<div class="ss" style="left:469px;top:869px">00001264</div>
<div class="a" style="left:534px;top:866px;width:1px;height:18px;background:#d0d0d0"></div>
<div class="ss" style="left:539px;top:869px">00001264: Java_com_example_javandk1_MainActivity_getText2</div>
<div class="a" style="left:997px;top:866px;width:1px;height:18px;background:#d0d0d0"></div>
<div class="ss" style="left:1002px;top:869px">(Synchronized with Hex View-1)</div>
<div class="a" style="left:1242px;top:866px;width:1px;height:18px;background:#d0d0d0"></div>
<!-- scrollbar -->
<div class="a" style="left:1899px;top:136px;width:19px;height:751px;background:#f0f0f0"></div><div class="a" style="left:1918px;top:864px;width:1px;height:23px;background:#f0f0f0"></div>
<div class="a" style="left:1899px;top:424px;width:19px;height:22px;background:#cdcdcd"></div>
<svg class="a" style="left:1904px;top:143px" width="10" height="7"><path d="M.7 6 L5 1.4 L9.3 6" stroke="#555" stroke-width="1.9" fill="none"/></svg>
<svg class="a" style="left:1904px;top:873px" width="10" height="7"><path d="M.7 1 L5 5.6 L9.3 1" stroke="#555" stroke-width="1.9" fill="none"/></svg>

<div class="dl" style="top:136px"><span class="k">.text:00001264</span></div>
<div class="dl" style="top:156px"><span class="k">.text:00001264</span></div>
<div class="dl" style="top:176px"><span class="k">.text:00001264</span>                 <span class="b">EXPORT Java_com_example_javandk1_MainActivity_getText2</span></div>
<div class="dl" style="top:196px"><span class="k">.text:00001264</span> <span class="b">Java_com_example_javandk1_MainActivity_getText2</span></div>
<div class="dl" style="top:216px"><span class="k">.text:00001264</span>                                         <span class="x">; DATA XREF: LOAD:00000258<span class="ar">↑</span>o</span></div>
<div class="dl" style="top:236px"><span class="k">.text:00001264</span> <span class="b">; __unwind {</span></div>
<div class="dl" style="top:256px"><span class="b">.text:00001264</span>                 <span class="n">LDR</span>             <span class="n">R12, [</span><span class="n y">R0</span><span class="n">]</span></div>
<div class="dot" style="top:259px"></div>
<div class="dl" style="top:276px"><span class="k">.text:00001268</span>                 <span class="n">STMFD</span>           <span class="n">SP!, {R3-R5,LR}</span></div>
<div class="dot" style="top:279px"></div>
<div class="dl" style="top:296px"><span class="k">.text:0000126C</span>                 <span class="n">MOV</span>             <span class="n">R4, </span><span class="n y">R0</span></div>
<div class="dot" style="top:299px"></div>
<div class="dl" style="top:316px"><span class="k">.text:00001270</span>                 <span class="n">LDR</span>             <span class="n">R2, =(aAge - </span><span class="b">0x1288</span><span class="n">)</span></div>
<div class="dot" style="top:319px"></div>
<div class="dl" style="top:336px"><span class="k">.text:00001274</span>                 <span class="n">MOV</span>             <span class="n">R5, R1</span></div>
<div class="dot" style="top:339px"></div>
<div class="dl" style="top:356px"><span class="k">.text:00001278</span>                 <span class="n">LDR</span>             <span class="n">R3, =(aLjavaLangStrin - </span><span class="b">0x128C</span><span class="n">)</span></div>
<div class="dot" style="top:359px"></div>
<div class="dl" style="top:376px"><span class="k">.text:0000127C</span>                 <span class="n">LDR</span>             <span class="n">R12, [R12,#</span><span class="o">0x240</span><span class="n">]</span></div>
<div class="dot" style="top:379px"></div>
<div class="dl" style="top:396px"><span class="k">.text:00001280</span>                 <span class="n">ADD</span>             <span class="n">R2, PC, R2 </span><span class="g">; "age"</span></div>
<div class="dot" style="top:399px"></div>
<div class="dl" style="top:416px"><span class="k">.text:00001284</span>                 <span class="n">ADD</span>             <span class="n">R3, PC, R3 </span><span class="g">; "Ljava/lang/String;"</span></div>
<div class="dot" style="top:419px"></div>
<div class="dl" style="top:436px"><span class="k">.text:00001288</span>                 <span class="n">BLX</span>             <span class="n">R12</span></div>
<div class="dot" style="top:439px"></div>
<div class="dl" style="top:456px"><span class="k">.text:0000128C</span>                 <span class="n">LDR</span>             <span class="n">R3, [R4]</span></div>
<div class="dot" style="top:459px"></div>
<div class="dl" style="top:476px"><span class="k">.text:00001290</span>                 <span class="n">MOV</span>             <span class="n">R1, R5</span></div>
<div class="dot" style="top:479px"></div>
<div class="dl" style="top:496px"><span class="k">.text:00001294</span>                 <span class="n">LDR</span>             <span class="n">R3, [R3,#</span><span class="o">0x244</span><span class="n">]</span></div>
<div class="dot" style="top:499px"></div>
<div class="dl" style="top:516px"><span class="k">.text:00001298</span>                 <span class="n">MOV</span>             <span class="n">R2, </span><span class="n y">R0</span></div>
<div class="dot" style="top:519px"></div>
<div class="dl" style="top:536px"><span class="k">.text:0000129C</span>                 <span class="n">MOV</span>             <span class="n y">R0</span><span class="n">, R4</span></div>
<div class="dot" style="top:539px"></div>
<div class="dl" style="top:556px"><span class="k">.text:000012A0</span>                 <span class="n">BLX</span>             <span class="n">R3</span></div>
<div class="dot" style="top:559px"></div>
<div class="dl" style="top:576px"><span class="k">.text:000012A4</span>                 <span class="n">MOV</span>             <span class="n">R4, </span><span class="n y">R0</span></div>
<div class="dot" style="top:579px"></div>
<div class="dl" style="top:596px"><span class="k">.text:000012A8</span>                 <span class="n">BL</span>              <span class="b">zhengchu</span></div>
<div class="dot" style="top:599px"></div>
<div class="dl" style="top:616px"><span class="k">.text:000012AC</span>                 <span class="n">MOV</span>             <span class="n y">R0</span><span class="n">, R4</span></div>
<div class="dot" style="top:619px"></div>
<div class="dl" style="top:636px"><span class="k">.text:000012B0</span>                 <span class="n">LDMFD</span>           <span class="n">SP!, {R3-R5,PC}</span></div>
<div class="dot" style="top:639px"></div>
<div class="dl" style="top:656px"><span class="k">.text:000012B0</span> <span class="g">; End of function Java_com_example_javandk1_MainActivity_getText2</span></div>
<div class="dl" style="top:676px"><span class="k">.text:000012B0</span></div>
<div class="dl" style="top:696px"><span class="k">.text:000012B0</span> <span class="g">; ---------------------------------------------------------------------------</span></div>
<div class="dl" style="top:716px"><span class="g">.text:000012B4</span> <span class="n">off_12B4</span>        <span class="n">DCD aAge - </span><span class="b">0x1288</span>       <span class="x">; DATA XREF: Java_com_example_javandk1_MainActivity_getText2+C<span class="ar">↑</span>r</span></div>
<div class="dot" style="top:719px"></div>
<div class="dl" style="top:736px"><span class="g">.text:000012B4</span>                                         <span class="g">; "age"</span></div>
<div class="dl" style="top:756px"><span class="g">.text:000012B8</span> <span class="n">off_12B8</span>        <span class="n">DCD aLjavaLangStrin - </span><span class="b">0x128C</span></div>
<div class="dot" style="top:759px"></div>
<div class="dl" style="top:776px"><span class="g">.text:000012B8</span>                                         <span class="x">; DATA XREF: Java_com_example_javandk1_MainActivity_getText2+14<span class="ar">↑</span>r</span></div>
<div class="dl" style="top:796px"><span class="g">.text:000012B8</span> <span class="b">; } // starts at 1264</span>                   <span class="g">; "Ljava/lang/String;"</span></div>
<div class="dl" style="top:816px"><span class="k">.text:000012BC</span></div>
<div class="dl" style="top:836px"><span class="k">.text:000012BC</span> <span class="g">; =============== S U B R O U T I N E =======================================</span></div>
<!-- cursor -->
<div class="a" style="left:953px;top:256px;width:2px;height:19px;background:#000"></div>
<!-- red annotation box -->
<div class="a" style="left:940px;top:314px;width:45px;height:28px;border:3px solid #e60012"></div>

<!-- output window title -->
<div class="a" style="left:0;top:891px;width:1920px;height:25px;border:1px solid #c8c8c8;border-bottom-color:#b4b4b4;background:#f0f0f0"></div>
<svg class="a" style="left:6px;top:896px" width="14" height="16" shape-rendering="crispEdges"><rect x=".5" y=".5" width="13" height="15" fill="#f4f8ff" stroke="#6a7a8a"/><rect x="0" y="0" width="14" height="3" fill="url(#tbg)"/><path d="M3 6.5h8M3 8.5h8M3 10.5h8M3 12.5h8" stroke="#4a5a6a" stroke-width="1"/></svg>
<div class="ss" style="left:25px;top:898px">Output window</div>
<svg class="a" style="left:1852px;top:899px" width="9" height="9"><rect x=".5" y="1" width="8" height="7.5" fill="none" stroke="#000" stroke-width="1"/><rect x="0" y="0" width="9" height="2" fill="#000"/></svg>
<svg class="a" style="left:1876px;top:899px" width="9" height="9"><rect x="2.5" y="1" width="5" height="4.5" fill="none" stroke="#000"/><rect x="2" y="0" width="6" height="2" fill="#000"/><rect x=".5" y="4" width="5" height="4.5" fill="#f0f0f0" stroke="#000"/><rect x="0" y="3" width="6" height="2" fill="#000"/></svg>
<svg class="a" style="left:1900px;top:900px" width="9" height="8"><path d="M.8.8l7.400 6.400M8.200.8l-7.400 6.400" stroke="#000" stroke-width="1.6" fill="none"/></svg>
<!-- output text -->
<div class="a" style="left:0;top:918px;width:1920px;height:33px;background:#fff;border:1px solid #7a7a7a;overflow:hidden">
<div class="ow" style="left:5px;top:-12px">Function argument information has been propagated</div>
<div class="ow" style="left:5px;top:8px">The initial autoanalysis has been finished.</div>
</div>
<div class="a" style="left:1899px;top:919px;width:19px;height:31px;background:#f0f0f0"></div>
<div class="a" style="left:1898px;top:934px;width:21px;height:1px;background:#000"></div>
<svg class="a" style="left:1904px;top:924px" width="9" height="6"><path d="M.7 5 L4.5 1.4 L8.3 5" stroke="#555" stroke-width="1.9" fill="none"/></svg>
<svg class="a" style="left:1904px;top:940px" width="9" height="6"><path d="M.7 1 L4.5 4.6 L8.3 1" stroke="#555" stroke-width="1.9" fill="none"/></svg>
<!-- python -->
<div class="a" style="left:2px;top:953px;width:62px;height:24px;background:#e1e1e1;border:1px solid #adadad"></div>
<div class="ss" style="left:9px;top:959px">Python</div>
<div class="a" style="left:68px;top:952px;width:1851px;height:26px;background:#fff;border:1px solid #7a7a7a"></div>
<!-- status bar -->
<div class="ss" style="left:2px;top:984px">AU:  idle</div>
<div class="a" style="left:91px;top:981px;width:1px;height:18px;background:#d0d0d0"></div>
<div class="ss" style="left:95px;top:984px">Down</div>
<div class="a" style="left:167px;top:981px;width:1px;height:18px;background:#d0d0d0"></div>
<div class="ss" style="left:171px;top:984px">Disk: 19GB</div>
<div class="a" style="left:253px;top:981px;width:1px;height:18px;background:#d0d0d0"></div>

</body></html>
